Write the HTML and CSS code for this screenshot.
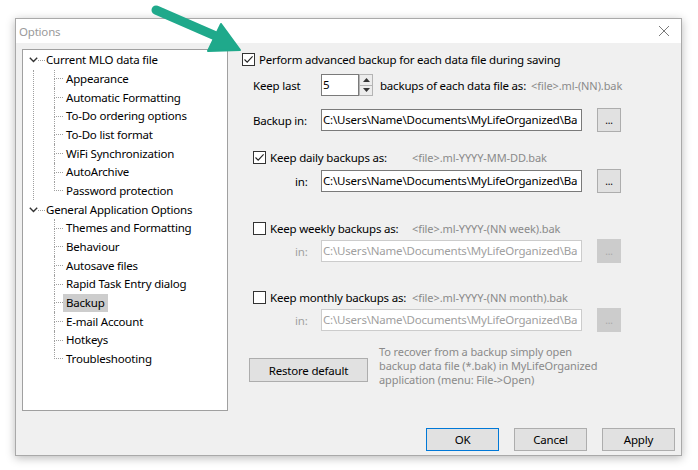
FILE: index.html
```html
<!DOCTYPE html>
<html>
<head>
<meta charset="utf-8">
<title>Options</title>
<link rel="stylesheet" href="styles.css">
</head>
<body>
<div class="window">
  <div class="titlebar">
    <span class="title">Options</span>
    <svg class="close" width="12" height="12" viewBox="0 0 12 12"><path d="M1 1L11 11M11 1L1 11" stroke="#7a7a7a" stroke-width="1" fill="none"/></svg>
  </div>
  <div class="content">
    <div class="main">
      <div class="tree">
        <div class="group has-next">
          <div class="root-row"><span class="chev"><svg width="9" height="6" viewBox="0 0 9 6"><path d="M0.8 0.8L4.5 4.5L8.2 0.8" stroke="#333" stroke-width="1.4" fill="none"/></svg></span><span class="stub"></span><span class="label">Current MLO data file</span></div>
          <div class="children">
            <div class="child"><span class="conn"><i class="up"></i><i class="down"></i></span><span class="label">Appearance</span></div>
            <div class="child"><span class="conn"><i class="up"></i><i class="down"></i></span><span class="label">Automatic Formatting</span></div>
            <div class="child"><span class="conn"><i class="up"></i><i class="down"></i></span><span class="label">To-Do ordering options</span></div>
            <div class="child"><span class="conn"><i class="up"></i><i class="down"></i></span><span class="label">To-Do list format</span></div>
            <div class="child"><span class="conn"><i class="up"></i><i class="down"></i></span><span class="label">WiFi Synchronization</span></div>
            <div class="child"><span class="conn"><i class="up"></i><i class="down"></i></span><span class="label">AutoArchive</span></div>
            <div class="child last"><span class="conn"><i class="up"></i><i class="down"></i></span><span class="label">Password protection</span></div>
          </div>
        </div>
        <div class="group">
          <div class="root-row"><span class="chev"><svg width="9" height="6" viewBox="0 0 9 6"><path d="M0.8 0.8L4.5 4.5L8.2 0.8" stroke="#333" stroke-width="1.4" fill="none"/></svg></span><span class="stub"></span><span class="label">General Application Options</span></div>
          <div class="children">
            <div class="child"><span class="conn"><i class="up"></i><i class="down"></i></span><span class="label">Themes and Formatting</span></div>
            <div class="child"><span class="conn"><i class="up"></i><i class="down"></i></span><span class="label">Behaviour</span></div>
            <div class="child"><span class="conn"><i class="up"></i><i class="down"></i></span><span class="label">Autosave files</span></div>
            <div class="child"><span class="conn"><i class="up"></i><i class="down"></i></span><span class="label">Rapid Task Entry dialog</span></div>
            <div class="child"><span class="conn"><i class="up"></i><i class="down"></i></span><span class="label selected">Backup</span></div>
            <div class="child"><span class="conn"><i class="up"></i><i class="down"></i></span><span class="label">E-mail Account</span></div>
            <div class="child"><span class="conn"><i class="up"></i><i class="down"></i></span><span class="label">Hotkeys</span></div>
            <div class="child last"><span class="conn"><i class="up"></i><i class="down"></i></span><span class="label">Troubleshooting</span></div>
          </div>
        </div>
      </div>

      <div class="panel">
        <div class="row check-row r1">
          <span class="cb checked"><svg width="11" height="11" viewBox="0 0 11 11"><path d="M1.5 5.5L4.2 8.2L9.6 2.3" stroke="#222" stroke-width="1.1" fill="none"/></svg></span>
          <span class="cb-label">Perform advanced backup for each data file during saving</span>
        </div>
        <div class="row field-row indent r2">
          <span class="field-label">Keep last</span>
          <span class="spin">
            <span class="edit spin-edit">5</span>
            <span class="spin-btns">
              <span class="spin-btn"><svg width="7" height="4" viewBox="0 0 7 4"><path d="M0 4L3.5 0L7 4Z" fill="#333"/></svg></span>
              <span class="spin-btn"><svg width="7" height="4" viewBox="0 0 7 4"><path d="M0 0L3.5 4L7 0Z" fill="#333"/></svg></span>
            </span>
          </span>
          <span class="after-spin">backups of each data file as:</span>
          <span class="hint hint-inline">&lt;file&gt;.ml-(NN).bak</span>
        </div>
        <div class="row field-row indent r3">
          <span class="field-label">Backup in:</span>
          <span class="edit path">C:\Users\Name\Documents\MyLifeOrganized\Ba</span>
          <span class="dots-btn">...</span>
        </div>

        <div class="row check-row indent r4">
          <span class="check-cell"><span class="cb checked"><svg width="11" height="11" viewBox="0 0 11 11"><path d="M1.5 5.5L4.2 8.2L9.6 2.3" stroke="#222" stroke-width="1.1" fill="none"/></svg></span><span class="cb-label">Keep daily backups as:</span></span>
          <span class="hint">&lt;file&gt;.ml-YYYY-MM-DD.bak</span>
        </div>
        <div class="row field-row indent r5">
          <span class="field-label in-label">in:</span>
          <span class="edit path">C:\Users\Name\Documents\MyLifeOrganized\Ba</span>
          <span class="dots-btn">...</span>
        </div>

        <div class="row check-row indent r6">
          <span class="check-cell"><span class="cb"></span><span class="cb-label">Keep weekly backups as:</span></span>
          <span class="hint">&lt;file&gt;.ml-YYYY-(NN week).bak</span>
        </div>
        <div class="row field-row indent r7">
          <span class="field-label in-label disabled">in:</span>
          <span class="edit path disabled">C:\Users\Name\Documents\MyLifeOrganized\Ba</span>
          <span class="dots-btn disabled">...</span>
        </div>

        <div class="row check-row indent r8">
          <span class="check-cell"><span class="cb"></span><span class="cb-label">Keep monthly backups as:</span></span>
          <span class="hint">&lt;file&gt;.ml-YYYY-(NN month).bak</span>
        </div>
        <div class="row field-row indent r9">
          <span class="field-label in-label disabled">in:</span>
          <span class="edit path disabled">C:\Users\Name\Documents\MyLifeOrganized\Ba</span>
          <span class="dots-btn disabled">...</span>
        </div>

        <div class="restore-row">
          <span class="btn restore">Restore default</span>
          <p class="note">To recover from a backup simply open<br>backup data file (*.bak) in MyLifeOrganized<br>application (menu: File-&gt;Open)</p>
        </div>
      </div>
    </div>
    <div class="footer">
      <span class="btn footer-btn default">OK</span>
      <span class="btn footer-btn">Cancel</span>
      <span class="btn footer-btn">Apply</span>
    </div>
  </div>
</div>
<svg class="arrow" width="110" height="70" viewBox="0 0 110 70">
  <path d="M8 6L70 33" stroke="#1fa98b" stroke-width="9" stroke-linecap="round" fill="none"/>
  <path d="M92 46L60 47L73 20Z" fill="#1fa98b" stroke="#1fa98b" stroke-width="2" stroke-linejoin="round"/>
</svg>
</body>
</html>
```

FILE: styles.css
```css
html, body {
  margin: 0;
  padding: 0;
  background: #ffffff;
}
body {
  width: 698px;
  height: 470px;
  overflow: hidden;
  font-family: "Noto Sans", "Open Sans", sans-serif;
  font-size: 11.5px;
  letter-spacing: -0.2px;
  color: #000;
  padding-top: 18px;
  padding-left: 15px;
  box-sizing: border-box;
}
.window {
  width: 667px;
  height: 438px;
  box-sizing: border-box;
  border: 1px solid #a9a9a9;
  background: #f0f0f0;
  box-shadow: 0 2px 9px rgba(0, 0, 0, 0.28);
  display: flex;
  flex-direction: column;
}
.titlebar {
  height: 24px;
  background: #ffffff;
  display: flex;
  align-items: center;
  justify-content: space-between;
  padding: 0 11px 0 3px;
}
.title {
  color: #9a9a9a;
}
.close {
  display: block;
}
.content {
  flex: 1;
  padding: 6px 6px 0 6px;
  display: flex;
  flex-direction: column;
}
.main {
  display: flex;
  height: 362px;
}

/* tree */
.tree {
  width: 206px;
  height: 362px;
  box-sizing: border-box;
  border: 1px solid #a0a0a0;
  background: #ffffff;
  padding-top: 1px;
}
.root-row, .child {
  height: 18.67px;
  display: flex;
  align-items: center;
}
.root-row {
  padding-left: 6px;
}
.chev {
  width: 9px;
  height: 100%;
  display: flex;
  align-items: center;
  justify-content: center;
}
.stub {
  width: 7px;
  border-top: 1px dotted #a0a0a0;
  margin-top: 1px;
}
.label {
  height: 18px;
  line-height: 18px;
  padding: 0 3px;
  white-space: nowrap;
}
.root-row .label {
  padding: 0 1px;
}
.label.selected {
  background: #cdcdcd;
}
.children {
  margin-left: 10px;
  border-left: 1px dotted transparent;
}
.has-next .children {
  border-left-color: #a0a0a0;
}
.child {
  padding-left: 20px;
}
.conn {
  width: 9px;
  height: 100%;
  display: flex;
  flex-direction: column;
}
.conn i {
  display: block;
  flex: 1;
  box-sizing: border-box;
  border-left: 1px dotted #a0a0a0;
}
.conn .up {
  border-bottom: 1px dotted #a0a0a0;
}
.child.last .conn .down {
  border-left-color: transparent;
}

/* panel */
.panel {
  margin-left: 14px;
  display: flex;
  flex-direction: column;
}
.row {
  display: flex;
  align-items: center;
  white-space: nowrap;
}
.check-row {
  height: 20px;
}
.field-row {
  height: 22px;
}
.indent {
  padding-left: 11px;
}
.r2 { margin-top: 5px; }
.r3 { margin-top: 13px; }
.r4 { margin-top: 16px; }
.r5 { margin-top: 3px; }
.r6 { margin-top: 26px; }
.r7 { margin-top: 2px; }
.r8 { margin-top: 25px; }
.r9 { margin-top: 2px; }

.cb {
  width: 13px;
  height: 13px;
  box-sizing: border-box;
  border: 1px solid #333333;
  background: #ffffff;
  display: inline-flex;
  align-items: center;
  justify-content: center;
  flex-shrink: 0;
}
.cb svg {
  display: block;
}
.cb-label {
  margin-left: 4px;
}
.check-cell {
  width: 159px;
  display: flex;
  align-items: center;
}
.hint {
  color: #8a8a8a;
  font-size: 11px;
  letter-spacing: -0.1px;
}
.hint-inline {
  margin-left: 5px;
}
.field-label {
  width: 68px;
  flex-shrink: 0;
}
.in-label {
  padding-left: 42px;
  box-sizing: border-box;
}
.disabled {
  color: #a0a0a0;
}
.edit {
  height: 22px;
  box-sizing: border-box;
  border: 1px solid #7a7a7a;
  background: #ffffff;
  padding: 0 1px;
  line-height: 20px;
  overflow: hidden;
  white-space: nowrap;
}
.path {
  width: 261px;
}
.edit.disabled {
  border-color: #cccccc;
  color: #a0a0a0;
}
.spin {
  display: flex;
  height: 22px;
}
.spin-edit {
  width: 38px;
}
.spin-btns {
  width: 14px;
  display: flex;
  flex-direction: column;
}
.spin-btn {
  flex: 1;
  box-sizing: border-box;
  border: 1px solid #b4b4b4;
  background: #ececec;
  display: flex;
  align-items: center;
  justify-content: center;
}
.spin-btn + .spin-btn {
  border-top: none;
}
.spin-btn svg {
  display: block;
}
.after-spin {
  margin-left: 7px;
}
.dots-btn {
  width: 24px;
  height: 24px;
  box-sizing: border-box;
  margin-left: 15px;
  border: 1px solid #adadad;
  background: #e1e1e1;
  display: flex;
  align-items: center;
  justify-content: center;
  font-size: 10px;
  line-height: 1;
  padding-bottom: 1px;
}
.dots-btn.disabled {
  border-color: #cccccc;
  background: #cccccc;
  color: #a8a8a8;
}

.restore-row {
  margin-top: 14px;
  display: flex;
  align-items: flex-start;
}
.btn {
  box-sizing: border-box;
  border: 1px solid #adadad;
  background: #e1e1e1;
  display: flex;
  align-items: center;
  justify-content: center;
}
.restore {
  width: 119px;
  height: 24px;
  margin-left: 7px;
  margin-top: 13px;
}
.note {
  margin: 0 0 0 11px;
  color: #8a8a8a;
  font-size: 11px;
  letter-spacing: -0.1px;
  line-height: 14px;
}

.footer {
  margin-top: 17px;
  display: flex;
  justify-content: flex-end;
  gap: 15px;
}
.footer-btn {
  width: 73px;
  height: 23px;
}
.footer-btn.default {
  border-color: #0078d7;
}

.arrow {
  position: absolute;
  left: 148px;
  top: 4px;
}
```
